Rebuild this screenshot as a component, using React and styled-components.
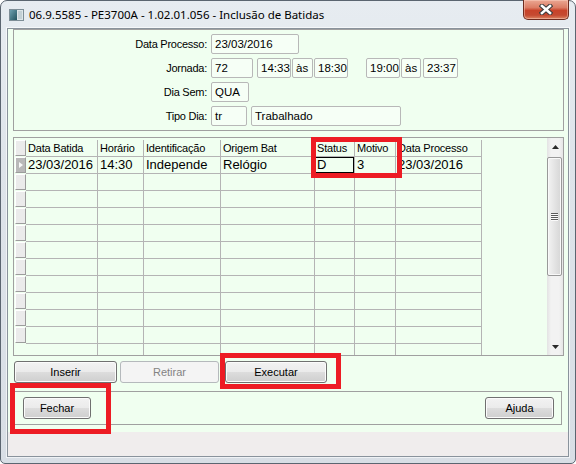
import React from "react";
import styled, { createGlobalStyle } from "styled-components";

const Global = createGlobalStyle`
    html, body {
        margin: 0;
        padding: 0;
        background: #ffffff;
    }
    body {
        font-family: "Liberation Sans", Arial, sans-serif;
    }
    * {
        box-sizing: border-box;
    }
`;

const Window = styled.div`
    position: relative;
    width: 576px;
    height: 464px;
    border: 1px solid #5b6570;
    border-radius: 7px 7px 5px 5px;
    background: linear-gradient(180deg, #e7ecf1 0%, #dee4ea 35%, #d8dee5 100%);
    display: flex;
    flex-direction: column;
`;

const TitleBar = styled.div`
    height: 27px;
    flex-shrink: 0;
    display: flex;
    align-items: center;
    padding-left: 8px;
`;

const Title = styled.span`
    margin-left: 5px;
    font-family: "Noto Sans", "Liberation Sans", sans-serif;
    font-size: 11.5px;
    color: #000;
    white-space: nowrap;
`;

const CloseButton = styled.div`
    margin-left: auto;
    margin-right: 6px;
    margin-top: -1px;
    align-self: flex-start;
    width: 46px;
    height: 20px;
    border: 1px solid #6e2b1f;
    border-top: none;
    border-radius: 0 0 5px 5px;
    background: linear-gradient(180deg, #eba793 0%, #dc7d65 40%, #c8432a 55%, #c54a31 80%, #dc8563 100%);
    box-shadow: inset 0 0 0 1px rgba(255, 215, 200, 0.45);
    display: flex;
    align-items: center;
    justify-content: center;
`;

const Client = styled.div`
    margin: 0 6px 6px;
    height: 429px;
    border: 1px solid #8a939c;
    box-shadow: 0 0 0 1px rgba(255, 255, 255, 0.6);
    display: flex;
    flex-direction: column;
`;

const FormArea = styled.div`
    height: 403px;
    flex-shrink: 0;
    background: #f0fff0;
    padding: 0 4px 0 5px;
    display: flex;
    flex-direction: column;
`;

const StatusStrip = styled.div`
    flex: 1;
    background: #f0eded;
`;

const Panel = styled.div`
    border: 1px solid #a0a0a0;
    flex-shrink: 0;
`;

const HeaderPanel = styled(Panel)`
    padding: 4px 0;
    display: flex;
    flex-direction: column;
    gap: 4px;
`;

const FieldRow = styled.div`
    display: flex;
    height: 20px;
`;

const Label = styled.div`
    width: 193px;
    text-align: right;
    font-size: 11px;
    letter-spacing: -0.25px;
    line-height: 20px;
    color: #000;
`;

const Field = styled.div`
    width: ${p => p.$w}px;
    margin-left: ${p => (p.$ml === undefined ? 4 : p.$ml)}px;
    height: 20px;
    border: 1px solid #b8b8b8;
    border-radius: 2px;
    background: #f6fff6;
    padding-left: 3px;
    font-size: 11.5px;
    line-height: 18px;
    color: #000;
    white-space: nowrap;
    overflow: hidden;
`;

const GridPanel = styled(Panel)`
    margin-top: 6px;
    height: 219px;
    display: flex;
`;

const GridBody = styled.div`
    flex: 1;
    min-width: 0;
    padding-top: 2px;
    overflow: hidden;
`;

const GridRow = styled.div`
    display: flex;
    height: 17px;
`;

const Indicator = styled.div`
    width: 11px;
    height: 16px;
    margin-left: 1px;
    visibility: ${p => (p.$blank ? "hidden" : "visible")};
    background: ${p => (p.$current ? "#b9b9b9" : "#ebebeb")};
    border-top: 1px solid #ffffff;
    border-left: 1px solid #ffffff;
    border-right: 1px solid #9c9c9c;
    border-bottom: 1px solid #9c9c9c;
    display: flex;
    align-items: center;
    justify-content: center;
`;

const Arrow = styled.span`
    width: 0;
    height: 0;
    border-left: 4px solid #f8f8f8;
    border-top: 3.5px solid transparent;
    border-bottom: 3.5px solid transparent;
`;

const Cell = styled.div`
    width: ${p => p.$w}px;
    height: 17px;
    border-right: 1px solid #b4b4b4;
    border-bottom: 1px solid #b4b4b4;
    padding-left: 2px;
    font-size: ${p => (p.$head ? 11 : 13)}px;
    letter-spacing: ${p => (p.$head ? -0.2 : 0)}px;
    line-height: 16px;
    color: #000;
    white-space: nowrap;
    overflow: hidden;
    box-shadow: ${p => (p.$focus ? "inset 0 0 0 1px #000" : "none")};
`;

const ScrollBar = styled.div`
    width: 16px;
    flex-shrink: 0;
    display: flex;
    flex-direction: column;
    background: linear-gradient(90deg, #e3e3e3, #f2f2f2 25%, #f2f2f2 75%, #e6e6e6);
`;

const ScrollArrow = styled.div`
    height: 17px;
    flex-shrink: 0;
    display: flex;
    align-items: center;
    justify-content: center;
`;

const Thumb = styled.div`
    margin: 2px 1px 0 0;
    height: 119px;
    border: 1px solid #999999;
    border-radius: 2px;
    background: linear-gradient(90deg, #f3f3f3, #e4e4e4 50%, #d6d6d6);
    box-shadow: inset 0 0 0 1px #f9f9f9;
    display: flex;
    align-items: center;
    justify-content: center;
`;

const Track = styled.div`
    flex: 1;
`;

const ButtonRow = styled.div`
    display: flex;
    margin-top: 5px;
    padding-left: 1px;
    flex-shrink: 0;
`;

const Button = styled.button`
    width: ${p => p.$w}px;
    height: 22px;
    margin-left: ${p => p.$ml || 0}px;
    padding: 0;
    border: 1px solid #707070;
    border-radius: 3px;
    background: linear-gradient(180deg, #f2f2f2 0%, #ebebeb 49%, #dddddd 50%, #cfcfcf 100%);
    box-shadow: inset 0 0 0 1px #fbfbfb;
    font-family: "Liberation Sans", Arial, sans-serif;
    font-size: 11px;
    color: #000;

    &:disabled {
        border-color: #b5b9bc;
        background: #f4f4f4;
        box-shadow: none;
        color: #838383;
    }
`;

const FooterPanel = styled(Panel)`
    margin-top: 8px;
    margin-right: 2px;
    height: 34px;
    display: flex;
    justify-content: space-between;
    padding: 5px 7px 0 9px;
`;

const Mark = styled.div`
    position: absolute;
    left: ${p => p.$x}px;
    top: ${p => p.$y}px;
    width: ${p => p.$w}px;
    height: ${p => p.$h}px;
    border: 5px solid #ed1c24;
    pointer-events: none;
`;

const columns = [
    { title: "Data Batida", w: 72 },
    { title: "Horário", w: 46 },
    { title: "Identificação", w: 77 },
    { title: "Origem Bat", w: 94 },
    { title: "Status", w: 40 },
    { title: "Motivo", w: 41 },
    { title: "Data Processo", w: 86 },
];

const firstRow = ["23/03/2016", "14:30", "Independe", "Relógio", "D", "3", "23/03/2016"];

const AppIcon = () =>
    <svg width="15" height="12" viewBox="0 0 15 12">
        <defs>
            <linearGradient id="appg" x1="0" y1="0" x2="1" y2="1">
                <stop offset="0" stopColor="#6b9fae" />
                <stop offset="1" stopColor="#23535f" />
            </linearGradient>
        </defs>
        <rect x="0.5" y="0.5" width="14" height="11" fill="#dde6e9" stroke="#7d8d96" />
        <rect x="1" y="1" width="7" height="10" fill="url(#appg)" />
        <rect x="9" y="2" width="4" height="8" fill="#c3d0d5" />
    </svg>

const CloseGlyph = () =>
    <svg width="14" height="11" viewBox="0 0 14 11">
        <g strokeLinecap="square">
            <path d="M3 2 L11 9 M11 2 L3 9" stroke="#3b3b3b" strokeWidth="4.6" />
            <path d="M3 2 L11 9 M11 2 L3 9" stroke="#ffffff" strokeWidth="2.6" />
        </g>
    </svg>

const Triangle = props =>
    <svg width="7" height="4" viewBox="0 0 7 4">
        <polygon points={props.down ? "0,0 7,0 3.5,4" : "0,4 3.5,0 7,4"} fill="#2a2a2a" />
    </svg>

const Grip = () =>
    <svg width="7" height="8" viewBox="0 0 7 8">
        {[0, 2, 4, 6].map(y =>
            <g key={y}>
                <rect x="0" y={y} width="7" height="1" fill="#5a5a5a" />
                <rect x="0" y={y + 1} width="7" height="1" fill="#fafafa" />
            </g>
        )}
    </svg>

export default function App() {
    const emptyRows = Array.from({ length: 11 }, (_, i) => i);

    return (
        <>
            <Global />
            <Window>
                <TitleBar>
                    <AppIcon />
                    <Title>06.9.5585 - PE3700A - 1.02.01.056 - Inclusão de Batidas</Title>
                    <CloseButton><CloseGlyph /></CloseButton>
                </TitleBar>
                <Client>
                    <FormArea>
                        <HeaderPanel>
                            <FieldRow>
                                <Label>Data Processo:</Label>
                                <Field $w={88}>23/03/2016</Field>
                            </FieldRow>
                            <FieldRow>
                                <Label>Jornada:</Label>
                                <Field $w={42}>72</Field>
                                <Field $w={34} $ml={4}>14:33</Field>
                                <Field $w={21} $ml={1}>às</Field>
                                <Field $w={34} $ml={1}>18:30</Field>
                                <Field $w={34} $ml={18}>19:00</Field>
                                <Field $w={20} $ml={1}>às</Field>
                                <Field $w={35} $ml={2}>23:37</Field>
                            </FieldRow>
                            <FieldRow>
                                <Label>Dia Sem:</Label>
                                <Field $w={38}>QUA</Field>
                            </FieldRow>
                            <FieldRow>
                                <Label>Tipo Dia:</Label>
                                <Field $w={36}>tr</Field>
                                <Field $w={150}>Trabalhado</Field>
                            </FieldRow>
                        </HeaderPanel>

                        <GridPanel>
                            <GridBody>
                                <GridRow>
                                    <Indicator />
                                    {columns.map(c =>
                                        <Cell key={c.title} $w={c.w} $head>{c.title}</Cell>
                                    )}
                                </GridRow>
                                <GridRow>
                                    <Indicator $current><Arrow /></Indicator>
                                    {columns.map((c, i) =>
                                        <Cell key={c.title} $w={c.w} $focus={i === 4}>{firstRow[i]}</Cell>
                                    )}
                                </GridRow>
                                {emptyRows.map(r =>
                                    <GridRow key={r}>
                                        <Indicator $blank={r === 10} />
                                        {columns.map(c => <Cell key={c.title} $w={c.w} />)}
                                    </GridRow>
                                )}
                            </GridBody>
                            <ScrollBar>
                                <ScrollArrow><Triangle /></ScrollArrow>
                                <Thumb><Grip /></Thumb>
                                <Track />
                                <ScrollArrow><Triangle down /></ScrollArrow>
                            </ScrollBar>
                        </GridPanel>

                        <ButtonRow>
                            <Button $w={103}>Inserir</Button>
                            <Button $w={99} $ml={3} disabled>Retirar</Button>
                            <Button $w={102} $ml={6}>Executar</Button>
                        </ButtonRow>

                        <FooterPanel>
                            <Button $w={68}>Fechar</Button>
                            <Button $w={69}>Ajuda</Button>
                        </FooterPanel>
                    </FormArea>
                    <StatusStrip />
                </Client>

                <Mark $x={310} $y={136} $w={91} $h={41} />
                <Mark $x={219} $y={352} $w={121} $h={36} />
                <Mark $x={9} $y={382} $w={101} $h={51} />
            </Window>
        </>
    );
}
